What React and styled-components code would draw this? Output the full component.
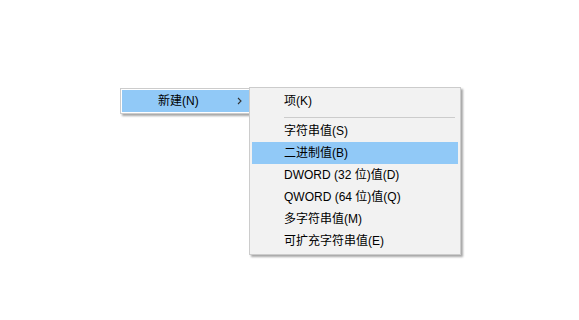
import styled, { createGlobalStyle } from 'styled-components'

const GlobalStyle = createGlobalStyle`
  body {
    margin: 0;
    background: #ffffff;
    font-family: 'Liberation Sans', 'Noto Sans CJK SC', sans-serif;
  }
`

const Canvas = styled.div`
  width: 579px;
  height: 320px;
  padding: 88px 0 0 120px;
  box-sizing: border-box;
`

const Menu = styled.div`
  position: relative;
  width: ${({ width }) => width}px;
  box-sizing: border-box;
  background: #f2f2f2;
  border: 1px solid #cccccc;
  padding: 2px;
  box-shadow: 2px 2px 2px rgba(0, 0, 0, 0.35);
`

const ParentMenu = styled(Menu)`
  padding: 1px;
  background: #ffffff;
`

const SubMenu = styled(Menu)`
  position: absolute;
  left: 128px;
  top: -2px;
  z-index: 2;
`

const Item = styled.div`
  display: flex;
  align-items: center;
  height: 22px;
  padding-left: ${({ indent }) => indent}px;
  padding-right: 8px;
  font-size: 12px;
  line-height: 22px;
  color: #000000;
  background: ${({ active }) => (active ? '#91c9f7' : 'transparent')};
  white-space: nowrap;
`

const Label = styled.span`
  flex: 1;
`

const Separator = styled.div`
  height: 1px;
  margin: 5px 3px 2px 32px;
  background: #cccccc;
`

function Chevron() {
  return (
    <svg width="5" height="8" viewBox="0 0 5 8">
      <path d="M1 1 L4 4 L1 7" fill="none" stroke="#333" strokeWidth="1.1" />
    </svg>
  )
}

const items = [
  '字符串值(S)',
  '二进制值(B)',
  'DWORD (32 位)值(D)',
  'QWORD (64 位)值(Q)',
  '多字符串值(M)',
  '可扩充字符串值(E)',
]

export default function App() {
  return (
    <Canvas>
      <GlobalStyle />
      <ParentMenu width={132}>
        <Item active indent={36}>
          <Label>新建(N)</Label>
          <Chevron />
        </Item>
        <SubMenu width={212}>
          <Item indent={32}>
            <Label>项(K)</Label>
          </Item>
          <Separator />
          {items.map((text) => (
            <Item key={text} indent={32} active={text === '二进制值(B)'}>
              <Label>{text}</Label>
            </Item>
          ))}
        </SubMenu>
      </ParentMenu>
    </Canvas>
  )
}
